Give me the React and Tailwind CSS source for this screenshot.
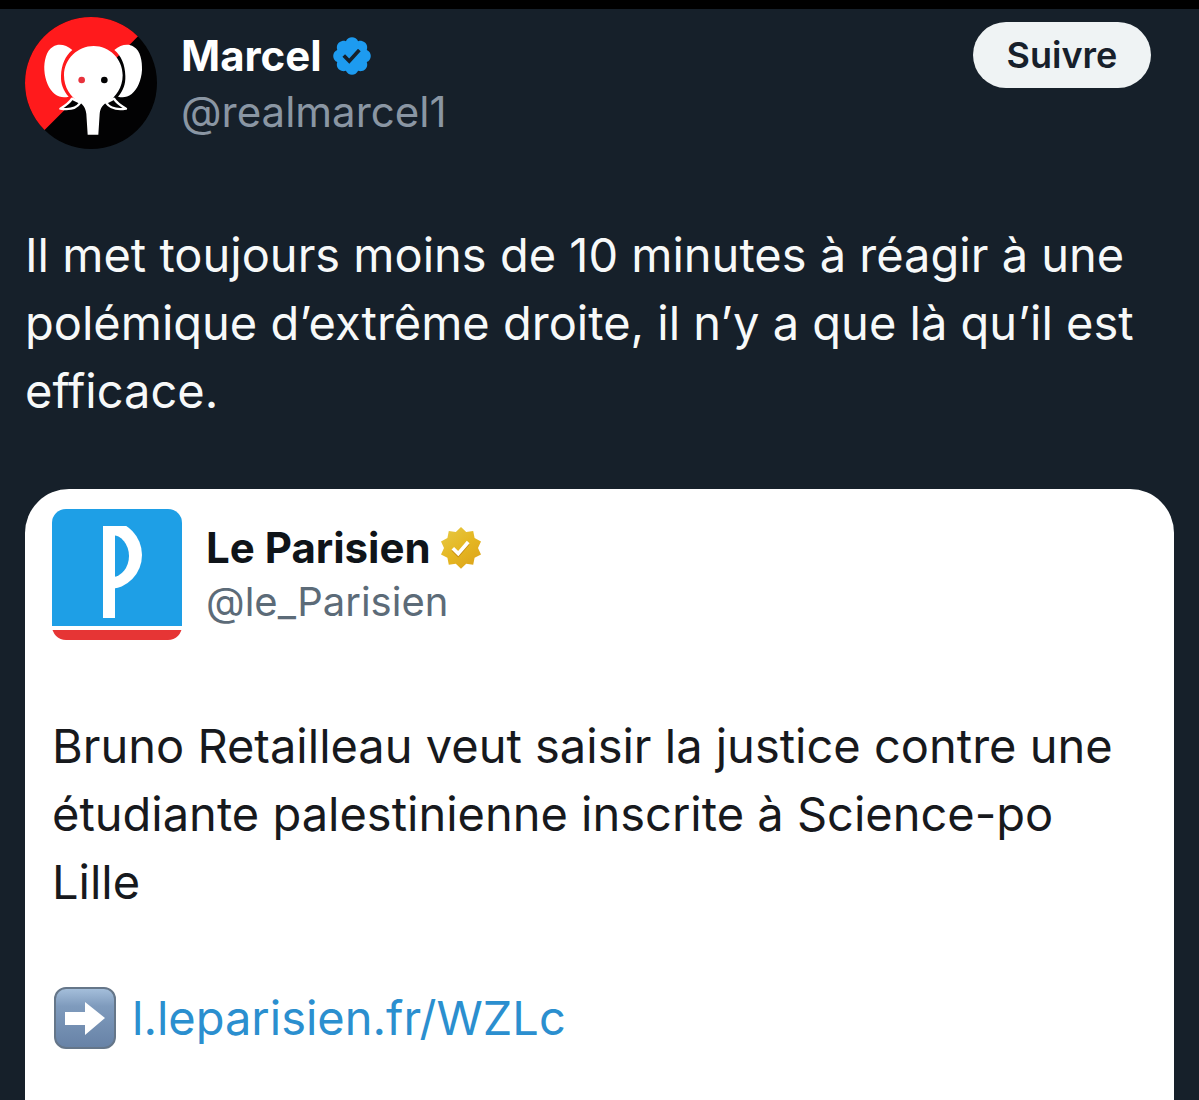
import React from 'react';

const ElephantAvatar = () => (
  <svg viewBox="45 51 396 396" className="h-[132px] w-[132px] shrink-0" role="img" aria-label="Marcel">
    <defs>
      <clipPath id="avatar-circle">
        <circle cx="243" cy="249" r="198" />
      </clipPath>
    </defs>
    <g clipPath="url(#avatar-circle)">
      <rect x="45" y="51" width="396" height="396" fill="#020203" />
      <path d="M45 51H441L385 108L106 388L45 449Z" fill="#ff1a1c" />
      {/* ears */}
      <path d="M187 150C168 134 146 130 129 140C108 152 102 184 103 210C105 242 117 268 134 282C148 293 163 293 176 290C160 272 152 252 153 228C154 194 166 168 187 150Z" fill="#fff" />
      <path d="M313 150C332 134 354 130 371 140C392 152 397 184 396 210C394 242 382 268 365 282C351 293 337 293 324 290C340 272 347 252 346 228C345 194 334 168 313 150Z" fill="#fff" />
      {/* head and trunk */}
      <path d="M251 138C298 138 338 176 338 226C338 262 318 292 292 306C278 314 271 324 269 342L265 404H233L229 342C227 324 220 314 208 306C181 292 162 262 162 226C162 176 204 138 251 138Z" fill="#fff" />
      {/* tusks */}
      <path d="M186 296C179 308 168 316 151 326C176 330 198 328 211 308Z" fill="#020203" stroke="#fff" strokeWidth="7" strokeLinejoin="round" />
      <path d="M312 296C319 308 330 316 348 326C323 330 302 328 288 308Z" fill="#020203" stroke="#fff" strokeWidth="7" strokeLinejoin="round" />
      <circle cx="215" cy="240" r="10" fill="#e8323c" />
      <circle cx="283" cy="240" r="10" fill="#020203" />
    </g>
  </svg>
);

const ParisienLogo = () => (
  <svg viewBox="0 0 130 131" className="h-[131px] w-[130px] shrink-0" role="img" aria-label="Le Parisien">
    <defs>
      <clipPath id="logo-frame">
        <rect width="130" height="131" rx="14" />
      </clipPath>
      <clipPath id="logo-bowl">
        <rect x="62" y="17" width="40" height="80" />
      </clipPath>
    </defs>
    <g clipPath="url(#logo-frame)">
      <rect width="130" height="131" fill="#fff" />
      <rect width="130" height="117" fill="#1e9fe6" />
      <rect y="121" width="130" height="10" fill="#e63535" />
      <g clipPath="url(#logo-bowl)">
        <ellipse cx="57" cy="46" rx="33" ry="34" fill="#fff" />
        <ellipse cx="60" cy="47" rx="17" ry="21" fill="#1e9fe6" />
      </g>
      <rect x="51" y="17" width="12" height="92" fill="#fff" />
    </g>
  </svg>
);

const BlueBadge = () => (
  <svg viewBox="0 0 22 22" className="h-11 w-11 shrink-0" role="img" aria-label="Compte certifié">
    <path
      fill="#1d9bf0"
      d="M20.396 11c-.018-.646-.215-1.275-.57-1.816-.354-.54-.852-.972-1.438-1.246.223-.607.27-1.264.14-1.897-.131-.634-.437-1.218-.882-1.687-.47-.445-1.053-.75-1.687-.882-.633-.13-1.29-.083-1.897.14-.273-.587-.704-1.086-1.245-1.44S11.647 1.62 11 1.604c-.646.017-1.273.213-1.813.568s-.969.854-1.24 1.44c-.608-.223-1.267-.272-1.902-.14-.635.13-1.22.436-1.69.882-.445.47-.749 1.055-.878 1.688-.13.633-.08 1.29.144 1.896-.587.274-1.087.705-1.443 1.245-.356.54-.555 1.17-.574 1.817.02.647.218 1.276.574 1.817.356.54.856.972 1.443 1.245-.224.606-.274 1.263-.144 1.896.13.634.433 1.218.877 1.688.47.443 1.054.747 1.687.878.633.132 1.29.084 1.897-.136.274.586.705 1.084 1.246 1.439.54.354 1.17.551 1.816.569.647-.016 1.276-.213 1.817-.567s.972-.854 1.245-1.44c.604.239 1.266.296 1.903.164.636-.132 1.22-.447 1.68-.907.46-.46.776-1.044.908-1.681s.075-1.299-.165-1.903c.586-.274 1.084-.705 1.439-1.246.354-.54.551-1.17.569-1.816zM9.662 14.85l-3.429-3.428 1.293-1.302 2.072 2.072 4.4-4.794 1.347 1.246z"
    />
  </svg>
);

const GoldBadge = () => (
  <svg viewBox="0 0 22 22" className="h-11 w-11 shrink-0" role="img" aria-label="Organisation certifiée">
    <defs>
      <linearGradient id="gold" x1="4" y1="2" x2="18" y2="20" gradientUnits="userSpaceOnUse">
        <stop offset="0" stopColor="#e6c63f" />
        <stop offset="0.5" stopColor="#e5b722" />
        <stop offset="1" stopColor="#dda51b" />
      </linearGradient>
    </defs>
    <path
      fill="url(#gold)"
      d="M13.6 3L11 .5 8.4 3l-3.5-.5-.7 3.5-3.2 1.7L2.5 11 1 14.2l3.2 1.7.7 3.5 3.5-.5 2.6 2.5 2.6-2.5 3.5.5.7-3.5 3.2-1.7-1.5-3.2L21 7.7 17.8 6l-.7-3.5z"
    />
    <path d="M6.9 11.8l2.7 2.7 5-5.8" fill="none" stroke="#c58a12" strokeWidth="1.7" />
    <path d="M6.9 11.1l2.7 2.7 5-5.8" fill="none" stroke="#fff" strokeWidth="1.8" />
  </svg>
);

const ArrowTile = () => (
  <svg viewBox="0 0 62 62" className="h-[62px] w-[62px] shrink-0" role="img" aria-label="Flèche vers la droite">
    <defs>
      <linearGradient id="tile" x1="0" y1="0" x2="0" y2="1">
        <stop offset="0" stopColor="#a6c0dc" />
        <stop offset="0.3" stopColor="#7f9bbd" />
        <stop offset="1" stopColor="#6782a6" />
      </linearGradient>
    </defs>
    <rect x="1" y="1" width="60" height="60" rx="11" fill="url(#tile)" stroke="#657689" strokeWidth="2" />
    <path d="M11 25H31V15L51 31L31 48V38H11Z" fill="#fff" />
  </svg>
);

const App = () => {
  return (
    <div className="flex min-h-screen flex-col border-t-9 border-black bg-[#16202a] font-['Inter','Liberation_Sans',sans-serif]">
      {/* author */}
      <header className="flex items-start pt-2 pr-12 pl-[25px]">
        <ElephantAvatar />
        <div className="ml-6 min-w-0 flex-1 pt-[11px] text-[42px] leading-[56px]">
          <div className="flex items-center gap-2">
            <span className="font-bold text-white">Marcel</span>
            <BlueBadge />
          </div>
          <p className="text-[#8a96a3]">@realmarcel1</p>
        </div>
        <button
          type="button"
          className="mt-[5px] h-[66px] w-[178px] cursor-pointer rounded-full bg-[#eff3f4] text-[36px] font-semibold text-[#17202b]"
        >
          Suivre
        </button>
      </header>

      <p className="px-[25px] pt-[72px] text-[47px] leading-[68px] text-[#f7f9f9]">
        Il met toujours moins de 10 minutes à réagir à une polémique d’extrême droite, il n’y a que là qu’il est efficace.
      </p>

      {/* quoted post */}
      <article className="mx-[25px] mt-16 flex-1 rounded-t-[44px] bg-white px-[27px] pt-5 pb-11">
        <div className="flex items-start">
          <ParisienLogo />
          <div className="ml-6 pt-3 leading-[54px]">
            <div className="flex items-center gap-2 text-[42px]">
              <span className="font-bold text-[#0f1419]">Le Parisien</span>
              <GoldBadge />
            </div>
            <p className="text-[40px] text-[#5c6b78]">@le_Parisien</p>
          </div>
        </div>

        <p className="pt-[72px] text-[47px] leading-[68px] text-[#17191d]">
          Bruno Retailleau veut saisir la justice contre une étudiante palestinienne inscrite à Science-po Lille
        </p>

        <div className="mt-[68px] flex items-center gap-4 pl-[2px] text-[47px] leading-[68px]">
          <ArrowTile />
          <a href="#" className="text-[#2b8fcf]">
            l.leparisien.fr/WZLc
          </a>
        </div>
      </article>
    </div>
  );
};

export default App;
